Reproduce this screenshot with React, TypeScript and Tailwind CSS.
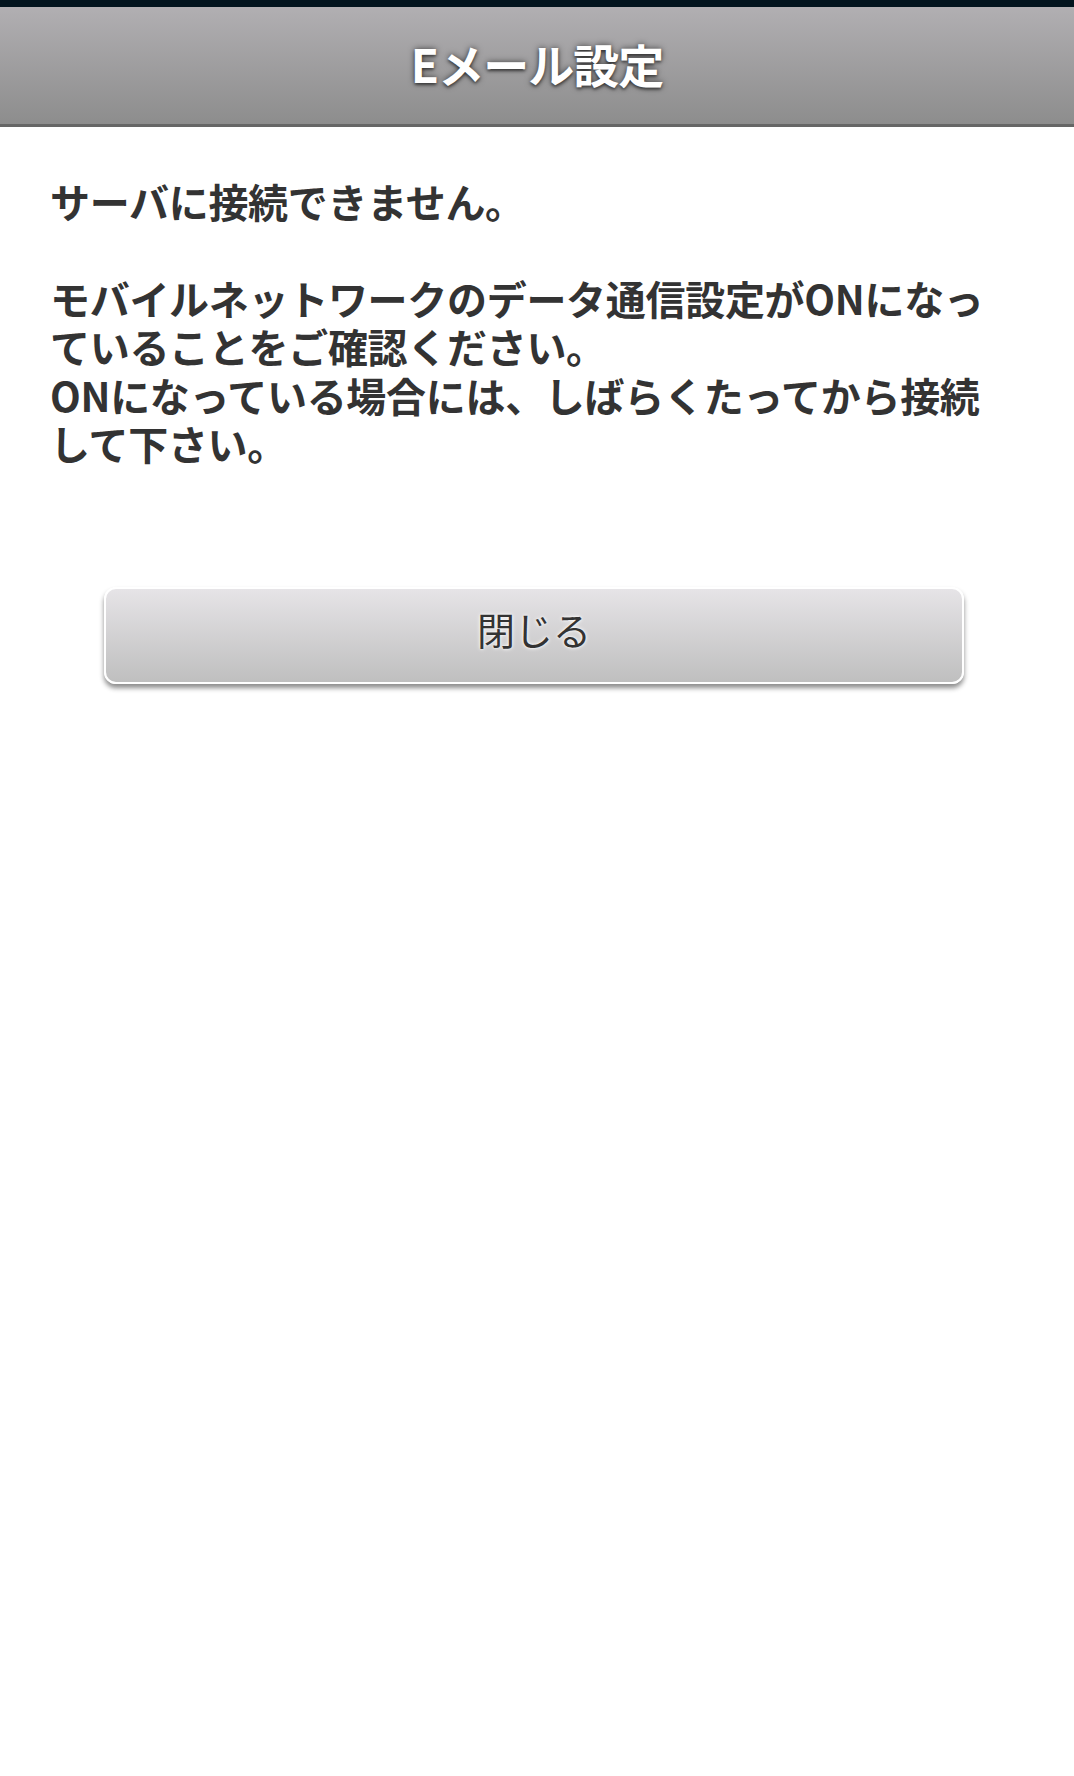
import React from "react";

export default function App() {
  const jp = { fontFamily: '"Noto Sans CJK JP", "Noto Sans", sans-serif' };
  return (
    <div className="w-[1074px] min-h-[1776px] bg-white flex flex-col" style={jp}>
      <div className="h-[7px] bg-[#02141e]" />
      <div className="h-[117px] bg-gradient-to-b from-[#b1afb2] to-[#8d8d8d] flex items-center justify-center pb-[6px]">
        <h1 className="text-[46px] leading-none font-bold text-white [text-shadow:0_0_6px_rgba(0,0,0,0.6),0_2px_3px_rgba(0,0,0,0.45)] tracking-[-1px]">
          Eメール設定
        </h1>
      </div>
      <div className="h-[3px] bg-[#666666]" />
      <div className="pt-[50px] px-[50px] text-[40px] leading-[48.5px] font-bold text-[#333333] tracking-[-0.3px] whitespace-nowrap">
        <p>サーバに接続できません。</p>
        <p className="h-[48px]" />
        <p>
          モバイルネットワークのデータ通信設定がONになっ
          <br />
          ていることをご確認ください。
          <br />
          ONになっている場合には、しばらくたってから接続
          <br />
          して下さい。
        </p>
      </div>
      <div className="px-[104px] pt-[119px]">
        <button className="w-[860px] h-[97px] pb-[12px] rounded-[12px] border-2 border-white bg-gradient-to-b from-[#e6e4e7] to-[#bfbfbf] shadow-[0_4px_5px_rgba(0,0,0,0.45)] flex items-center justify-center">
          <span className="text-[38px] leading-none font-normal text-[#333333] [text-shadow:0_0_4px_#ffffff,0_0_2px_#ffffff]">
            閉じる
          </span>
        </button>
      </div>
    </div>
  );
}
